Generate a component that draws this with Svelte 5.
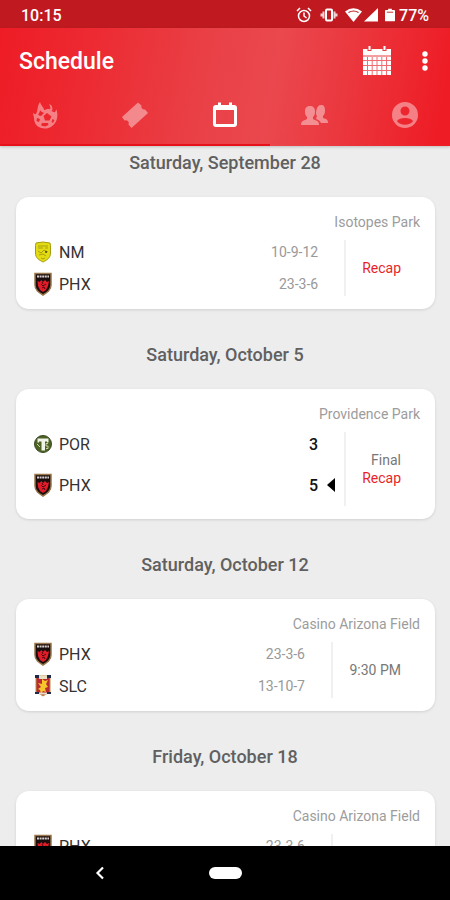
<script>
  const tabs = ['Matches', 'Tickets', 'Schedule', 'Community', 'Profile'];
  const active = 'Schedule';

  const games = [
    {
      date: 'Saturday, September 28',
      venue: 'Isotopes Park',
      teams: [
        { name: 'NM', record: '10-9-12' },
        { name: 'PHX', record: '23-3-6' }
      ],
      recap: true
    },
    {
      date: 'Saturday, October 5',
      venue: 'Providence Park',
      teams: [
        { name: 'POR', score: 3 },
        { name: 'PHX', score: 5, winner: true }
      ],
      status: 'Final',
      recap: true
    },
    {
      date: 'Saturday, October 12',
      venue: 'Casino Arizona Field',
      teams: [
        { name: 'PHX', record: '23-3-6' },
        { name: 'SLC', record: '13-10-7' }
      ],
      status: '9:30 PM'
    },
    {
      date: 'Friday, October 18',
      venue: 'Casino Arizona Field',
      teams: [{ name: 'PHX', record: '23-3-6' }]
    }
  ];
</script>

{#snippet crest(team)}
  {#if team === 'NM'}
    <svg class="crest" viewBox="0 0 18 24" aria-hidden="true">
      <path d="M2 3Q9 1 16 3L16.500 5.500V13C16.500 18 13 20 9 22C5 20 1.500 18 1.500 13V5.500Z" fill="#e4dc12" stroke="#a39c10" />
      <path d="M4 6h10M4 8h5M11 8h3M4 11l3 2 3-3 4 2M5 15l4-1 3 2M7 18l2 1 2-1" stroke="#a8a010" fill="none" />
      <circle cx="12" cy="12" r="1" fill="#4a4708" />
    </svg>
  {:else if team === 'PHX'}
    <svg class="crest" viewBox="0 0 18 24" aria-hidden="true">
      <path d="M1 1.500H17V13C17 18 13 20.500 9 23C5 20.500 1 18 1 13Z" fill="#1a0d0d" stroke="#98754a" stroke-width="1.500" />
      <path d="M3 4.500h12" stroke="#d6cfd0" stroke-width="2" stroke-dasharray="2 .6" />
      <path d="M3.500 9l2 1 2-2 1.500 2 2-2 2 2 2-1-1 5-2 4-3 2-3-2-2-4Z" fill="#e21c28" />
      <path d="M7 12l2 2 3-2M8 10l1 2M8 16l2-1 1 2" stroke="#4a0b10" fill="none" />
    </svg>
  {:else if team === 'POR'}
    <svg class="crest" viewBox="0 0 18 24" aria-hidden="true">
      <circle cx="9" cy="12" r="8.500" fill="#4c6323" stroke="#3c4a25" />
      <path d="M3.500 6.500h11v4h-1.500v-1H11v9H7.500v-9H5v1H3.500Z" fill="#f2f4ec" />
      <path d="M3 12l3 3M14 11.500h-2v2.500h2v2.500h-2" stroke="#c9d2a9" fill="none" />
    </svg>
  {:else}
    <svg class="crest" viewBox="0 0 18 24" aria-hidden="true">
      <path d="M2 2h14v16l-4 2-3 2-3-2-4-2Z" fill="#ba2935" stroke="#b99145" />
      <path d="M1 1h4v3H1ZM13 1h4v3h-4ZM1 18h4v2H1ZM13 18h4v2h-4Z" fill="#202848" />
      <path d="M5 2h8v3H5Z" fill="#e9dfc2" />
      <path d="M8 5l3 2 3-1-2 4 2 3-3 1 1 4-3-1-2 3-1-4-2-1 3-2-3-4 4 1Z" fill="#f6c52b" />
      <path d="M5 19.500h8" stroke="#e9dfc2" stroke-width="2" />
    </svg>
  {/if}
{/snippet}

<div class="screen">
  <div class="statusbar">
    <span>10:15</span>
    <div class="indicators">
      <svg width="16" height="18" viewBox="0 0 16 18" fill="none" stroke="#fff" stroke-width="1.500" aria-hidden="true">
        <circle cx="8" cy="10" r="5.500" />
        <path d="M8 6.500V10l2.500 2M1 5l3-3M15 5l-3-3" />
      </svg>
      <svg class="vibrate" width="18" height="16" viewBox="0 0 18 16" fill="none" stroke="#fff" aria-hidden="true">
        <rect x="6" y="2.500" width="6" height="11" rx="1" stroke-width="2" />
        <path d="M3.500 4.500v7M14.500 4.500v7M1.500 6.500v3M16.500 6.500v3" stroke-width="2" opacity=".8" />
      </svg>
      <svg class="wifi" width="17" height="16" viewBox="0 0 17 16" aria-hidden="true">
        <path d="M0 4.500Q8.500-2 17 4.500L8.500 15Z" fill="#fff" />
        <path d="M3.500 5.500Q8.500 2.500 13.500 5.500" fill="none" stroke="#c01a20" stroke-width="1.200" />
      </svg>
      <svg class="signal" width="14" height="16" viewBox="0 0 14 16" aria-hidden="true">
        <path d="M14 1v13.500H0Z" fill="#fff" />
      </svg>
      <svg class="battery" width="10" height="16" viewBox="0 0 11 16" aria-hidden="true">
        <path d="M3.500 1h4v1.500H10a1 1 0 0 1 1 1V14a1 1 0 0 1-1 1H1a1 1 0 0 1-1-1V3.500a1 1 0 0 1 1-1h2.500Z" fill="#fff" />
        <path d="M2 5h7" stroke="#d8686c" stroke-width="1.500" />
      </svg>
      <span>77%</span>
    </div>
  </div>

  <header>
    <div class="toolbar">
      <h1>Schedule</h1>
      <button aria-label="Open calendar">
        <svg width="30" height="30" viewBox="0 0 30 30" aria-hidden="true">
          <path d="M1 3h28v26H1Z" fill="#fff" />
          <path d="M1 10h28" stroke="#ea3c43" stroke-width="1" />
          <path d="M1 14.500h28M1 19.500h28M1 24.500h28M5.500 11v18M10.200 11v18M15 11v18M19.800 11v18M24.500 11v18" stroke="#ea3c43" stroke-width="1" opacity=".75" />
          <path d="M7.500 0v5M22.500 0v5" stroke="#ea3c43" stroke-width="4" />
          <path d="M7.500 0v4M22.500 0v4" stroke="#fff" stroke-width="2" />
        </svg>
      </button>
      <button class="more" aria-label="More options">
        <svg width="6" height="22" viewBox="0 0 6 22" fill="#fff" aria-hidden="true">
          <circle cx="3" cy="4" r="2.700" /><circle cx="3" cy="11" r="2.700" /><circle cx="3" cy="18" r="2.700" />
        </svg>
      </button>
    </div>
    <nav class="tabs" aria-label="Sections">
      {#each tabs as tab}
        <button class:active={tab === active} aria-label={tab} aria-current={tab === active ? 'page' : undefined}>
          <svg width="28" height="28" viewBox="0 0 28 28" fill="currentColor" aria-hidden="true">
            {#if tab === 'Matches'}
              <path fill-rule="evenodd" d="M9 1C10 5 13 6 13 9C17 8 19 7 20 10C22 10 23 12 24 11C25 10 25 9 25 8C27 12 27 18 24 22C21 26 18 27.500 14 27.500C8 27.500 3 24 3 17C3 15 2 14 2 12C3 12 4 14 5 13C7 10 6 5 9 1ZM9 9C9 11 8 12 7 14L10 15L13 12C12 11 10 11 9 9ZM16 12L12.500 15L14 19.500H18.500L20.500 15.500ZM6 17L5.500 20L8 21L9 18ZM11 22L10 24.500L14 25.500L17.500 24L17 22ZM21.500 18L20.500 21L22 22L23.500 19Z" />
              <path d="M18 3c3 1 4 4 3 7l-2-1c1-2 0-4-1-6Z" />
            {:else if tab === 'Tickets'}
              <path d="M17 1.500l3.500 3a3 3 0 0 0 3.500 4l3 3.500L10.500 27l-3-3.500a3 3 0 0 0-4-4L1 16Z" />
            {:else if tab === 'Schedule'}
              <path d="M5 4h2V1.500h3V4h8V1.500h3V4h2a3 3 0 0 1 3 3v16a3 3 0 0 1-3 3H5a3 3 0 0 1-3-3V7a3 3 0 0 1 3-3ZM5 9v14h18V9Z" fill-rule="evenodd" />
            {:else if tab === 'Community'}
              <path d="M0 24c0-4 2-4 6-6v-2c-2-2-2-4-2-6 0-3 2-5 5-5s5 2 5 5c0 2 0 4-2 6v2c4 2 6 2 6 6Z" />
              <path d="M16 15c-1-1-1-2-1-4l1-4c1-2 2-3 4-3 3 0 4 2 4 5 0 2 0 4-2 6v2c4 1 5 2 5 5h-7c-1-2-2-3-5-4Z" />
            {:else}
              <path fill-rule="evenodd" d="M14 1a13 13 0 1 0 0 26a13 13 0 1 0 0-26ZM14 5.500a4.500 4.500 0 1 1 0 9a4.500 4.500 0 1 1 0-9ZM6 20c2-4 14-4 16 0c-3 5-13 5-16 0Z" />
            {/if}
          </svg>
        </button>
      {/each}
    </nav>
  </header>

  <main>
    <div class="list">
      {#each games as game}
        <section>
          <h2>{game.date}</h2>
          <article>
            <p class="venue">{game.venue}</p>
            <div class="body">
              <div class="teams" class:scored={game.teams[0].score !== undefined}>
                {#each game.teams as team}
                  <div class="team">
                    {@render crest(team.name)}
                    <span class="name">{team.name}</span>
                    {#if team.score !== undefined}
                      <strong>{team.score}</strong>
                    {:else}
                      <span class="record">{team.record}</span>
                    {/if}
                    <span class="mark" class:winner={team.winner}></span>
                  </div>
                {/each}
              </div>
              <div class="status" class:upcoming={!game.recap}>
                {#if game.status}<span>{game.status}</span>{/if}
                {#if game.recap}<a href="#recap">Recap</a>{/if}
              </div>
            </div>
          </article>
        </section>
      {/each}
    </div>
  </main>

  <div class="sysnav">
    <button aria-label="Back">
      <svg width="10" height="14" viewBox="0 0 10 14" fill="none" stroke="#fff" stroke-width="2.200" aria-hidden="true">
        <path d="M8 1.500L2.500 7L8 12.500" />
      </svg>
    </button>
    <button aria-label="Home"><span class="pill"></span></button>
    <span></span>
  </div>
</div>

<style>
  .screen {
    display: flex;
    flex-direction: column;
    height: 100vh;
    overflow: hidden;
    background: #ededed;
    font-family: Roboto, 'Liberation Sans', sans-serif;
    font-size: 14px;
  }
  button {
    display: flex;
    align-items: center;
    justify-content: center;
    padding: 0;
    border: 0;
    background: none;
    color: inherit;
  }
  h1, h2, p { margin: 0; }

  .statusbar {
    display: flex;
    flex: none;
    align-items: center;
    justify-content: space-between;
    height: 28px;
    padding: 2px 21px 0 21px;
    box-sizing: border-box;
    background: #c01a20;
    color: #fff;
    font-size: 16px;
    font-weight: 500;
  }
  .indicators { display: flex; align-items: center; }
  .vibrate { margin-left: 8px; }
  .wifi { margin-left: 7px; }
  .signal { margin-left: 2px; }
  .battery { margin: 0 4px 0 7px; }

  header {
    position: relative;
    z-index: 1;
    flex: none;
    background: linear-gradient(100deg, #ee1c25 0%, #ed2a32 20%, #e94046 45%, #ea484e 60%, #eb383f 75%, #ee1c25 97%);
    box-shadow: 0 1px 3px rgba(0, 0, 0, 0.2);
    color: #fff;
  }
  .toolbar {
    display: flex;
    align-items: center;
    height: 66px;
    padding: 0 22px 0 19px;
  }
  h1 {
    flex: 1;
    padding-top: 2px;
    font-size: 23px;
    font-weight: 500;
    line-height: 28px;
  }
  .more { margin-left: 30px; }
  .tabs {
    display: flex;
    height: 52px;
    background: linear-gradient(#e8111b, #e8111b) left bottom / 60% 2px no-repeat;
  }
  .tabs button {
    flex: 1;
    padding-bottom: 10px;
    color: rgba(255, 255, 255, 0.42);
  }
  .tabs button.active { color: #fff; }

  main {
    flex: 1;
    min-height: 0;
    overflow: hidden;
  }
  .list { margin-top: -29px; }
  h2 {
    padding: 34px 0 22px;
    color: #606060;
    font-size: 18px;
    font-weight: 500;
    line-height: 24px;
    text-align: center;
  }
  article {
    margin: 0 15px 0 16px;
    padding: 15px 15px 13px 18px;
    border-radius: 13px;
    background: #fff;
    box-shadow: 0 1px 3px rgba(0, 0, 0, 0.12);
  }
  .venue {
    margin-bottom: 8px;
    color: #9c9c9c;
    line-height: 20px;
    text-align: right;
  }
  .body {
    display: flex;
    min-height: 56px;
    padding-right: 19px;
  }
  .teams {
    display: flex;
    flex: 1;
    flex-direction: column;
    gap: 8px;
  }
  .teams.scored { gap: 17px; padding-bottom: 9px; }
  .team {
    display: flex;
    align-items: center;
    height: 24px;
  }
  .crest { width: 18px; height: 24px; }
  .name {
    flex: 1;
    margin-left: 7px;
    color: #333;
    font-size: 16px;
  }
  .record { color: #999; }
  strong { color: #111; font-size: 16px; font-weight: 500; }
  .mark {
    display: flex;
    justify-content: center;
    width: 26px;
  }
  .winner::before {
    content: '';
    border: solid transparent;
    border-width: 7px 8px 7px 0;
    border-right-color: #000;
  }
  .status {
    display: flex;
    flex-direction: column;
    justify-content: center;
    padding-left: 16px;
    border-left: 2px solid #f0f0f0;
    color: #777;
    line-height: 18px;
    text-align: right;
  }
  .upcoming { min-width: 52px; }
  a { color: #e81f2b; text-decoration: none; }

  .sysnav {
    display: flex;
    flex: none;
    height: 54px;
    padding: 0 38px;
    background: #000;
  }
  .sysnav > * { flex: 1; }
  .sysnav .pill {
    width: 33px;
    height: 12px;
    border-radius: 6px;
    background: #fff;
  }
</style>
